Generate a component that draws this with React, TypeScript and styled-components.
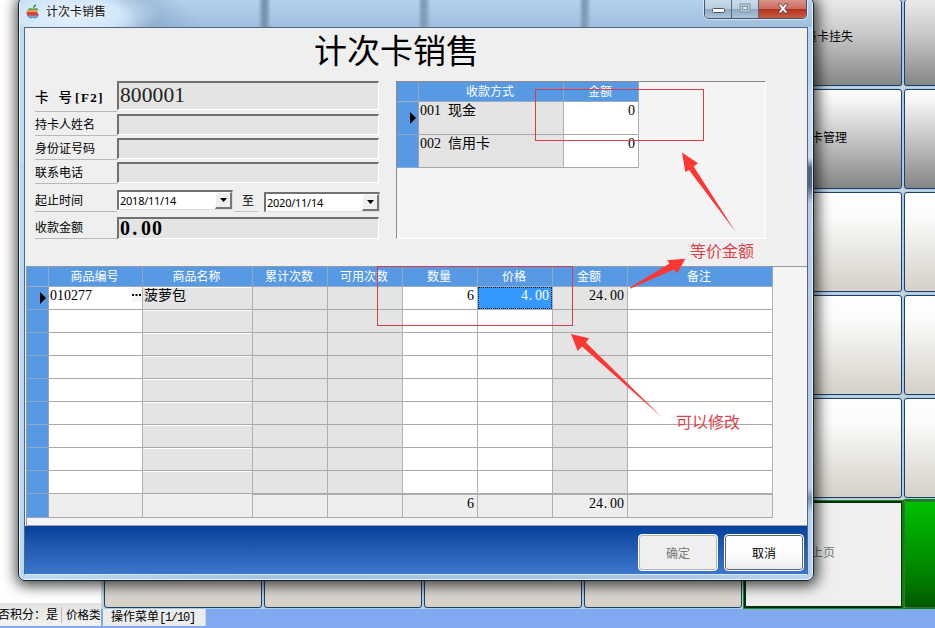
import React from "react";
import styled, { createGlobalStyle, css } from "styled-components";

const cjk = `"Noto Sans CJK SC", sans-serif`;
const blue = "#579ae3";

const GlobalStyle = createGlobalStyle`
  * { box-sizing: border-box; }
  html, body { margin: 0; height: 100%; overflow: hidden; }
  body { font-family: "Liberation Serif", ${cjk}; font-size: 12px; line-height: 16px; color: #000; }
`;

const Desktop = styled.div`
  position: relative;
  width: 935px;
  height: 628px;
  overflow: hidden;
  background: #80a9ef;
  display: flex;
`;

/* ---------- application behind the dialog ---------- */

const SideColumn = styled.div`
  width: 101px;
  height: 626px;
  flex: none;
  display: flex;
  flex-direction: column;
  overflow: hidden;
  background: #fff;
`;
const SideBody = styled.div`
  flex: 1;
`;
const StatusBar = styled.div`
  height: 23px;
  display: flex;
  align-items: center;
  white-space: nowrap;
  background: linear-gradient(#e3e2e0, #f3f3f3);
`;
const StatusItem = styled.span<{ $first?: boolean }>`
  flex: none;
  width: ${(p) => (p.$first ? 64 : 39)}px;
  margin-left: ${(p) => (p.$first ? -2 : 0)}px;
  padding-left: ${(p) => (p.$first ? 0 : 4)}px;
  font-size: ${(p) => (p.$first ? 12 : 11.5)}px;
  border-right: ${(p) => (p.$first ? 1 : 0)}px solid #bbb;
`;
const MenuColumn = styled.div`
  width: 834px;
  height: 628px;
  flex: none;
  display: flex;
  flex-direction: column;
`;
const TileGrid = styled.div`
  height: 609px;
  flex: none;
  padding-left: 2px;
  display: grid;
  grid-template-columns: repeat(6, 160px);
  grid-template-rows: 87px repeat(4, 103px) 110px;
  overflow: hidden;
  background: #cdd2d2;
`;
const tones = {
  dark: "linear-gradient(#e9e9e9, #c9c9c9 40%, #868686)",
  grey: "linear-gradient(#fff, #f4f4f4 12%, #c5c5c5 50%, #868686)",
  light: "linear-gradient(#fff, #fbfbfa 25%, #e9e7e3 60%, #d5d0c7)",
  white: "#efefef",
  green: "linear-gradient(#00c000, #007c00 75%, #005800)",
};
const labelTops = { dark: 29, grey: 40, light: 0, white: 42, green: 0 };
const Tile = styled.div<{ $tone: keyof typeof tones; $indent?: number }>`
  margin: ${(p) => (p.$tone === "dark" ? "0 1px 1px" : "2px 1px 1px")};
  padding-left: ${(p) => p.$indent ?? 0}px;
  padding-top: ${(p) => labelTops[p.$tone]}px;
  border: 1px solid #1e3f66;
  border-top-width: ${(p) => (p.$tone === "dark" ? 0 : 1)}px;
  border-radius: 3px;
  box-shadow: 0 0 0 1px #a9cbea;
  background: ${(p) => tones[p.$tone]};
  white-space: nowrap;
  ${(p) =>
    p.$tone === "white" &&
    css`
      border: 2px solid #052f05;
      border-right-width: 1px;
      border-radius: 0;
      box-shadow: 0 0 0 1px #1b8a1b;
      color: #777;
    `}
  ${(p) =>
    p.$tone === "green" &&
    css`
      border: 1px solid #3a6f3a;
      border-radius: 2px;
      box-shadow: 0 0 0 2px #0b820b;
    `}
`;
const Tab = styled.div`
  width: 103px;
  height: 17px;
  margin-left: 2px;
  padding-left: 8px;
  background: #ececec;
  border-right: 1px solid #cfd3da;
`;
const Narrow = styled.span`
  font-family: "Liberation Mono", monospace;
  font-size: 12px;
  letter-spacing: -1.2px;
`;

/* ---------- dialog frame ---------- */

const Dialog = styled.div`
  position: absolute;
  left: 18px;
  top: -3px;
  width: 796px;
  height: 584px;
  display: flex;
  flex-direction: column;
  border: 1px solid #17222f;
  border-radius: 7px;
  padding: 0 5px 5px;
  background:
    linear-gradient(to bottom, transparent 0 166px, #b9d8f8 166px) left / 5px 100% no-repeat,
    linear-gradient(to bottom, transparent 0 85px, #c6dcf2 95px 160px, #52677e 170px 188px, #b5cfe9 205px 490px, #7895b0 500px, #b5d2f0 515px) right / 6px 100% no-repeat,
    linear-gradient(to right, #bfdcf7, #a4c4e2 30%, #a7c5e0 80%, #b8d6f4);
  box-shadow:
    inset 0 0 0 1px rgba(255, 255, 255, 0.75),
    1px 2px 14px 3px rgba(0, 0, 0, 0.72);
`;
const TitleBar = styled.div`
  height: 29px;
  margin: 0 -4px;
  flex: none;
  display: flex;
  align-items: flex-start;
  padding: 2px 5px 0 6px;
  border-radius: 6px 6px 0 0;
  background:
    radial-gradient(ellipse 90px 30px at 50px 17px, #e4f1fd, #d3e7fa 55%, transparent),
    linear-gradient(to right, transparent 238px, #7795b3 243px 246px, transparent 251px 398px, #7f9dba 402px 405px, transparent 411px 559px, #7f9dba 563px 566px, transparent 571px),
    linear-gradient(55deg, transparent 85px, rgba(125, 156, 188, 0.6) 100px, transparent 150px),
    linear-gradient(#b5d3ef, #9fbfde);
`;
const IconSlot = styled.span`
  display: flex;
  margin-top: 4px;
`;
const Caption = styled.div`
  margin: 4px 0 0 6px;
  flex: 1;
  color: #111;
  text-shadow: 0 0 5px #fff;
`;
const WindowButtons = styled.div`
  display: flex;
  height: 19px;
  width: 103px;
  border: 1px solid #44566a;
  border-top: 0;
  border-radius: 0 0 5px 5px;
  overflow: hidden;
  box-shadow: 0 0 0 1px rgba(255, 255, 255, 0.5);
`;
const WindowButton = styled.div<{ $kind: "min" | "max" | "close" }>`
  width: ${(p) => (p.$kind === "close" ? 47 : 27)}px;
  display: flex;
  align-items: center;
  justify-content: center;
  padding-bottom: ${(p) => (p.$kind === "close" ? 1 : 3)}px;
  border-right: ${(p) => (p.$kind === "close" ? 0 : 1)}px solid #54677b;
  background: ${(p) =>
    p.$kind === "close"
      ? "linear-gradient(#d8948a, #cb6d5f 48%, #b2301c 52%, #cc5f3e)"
      : "linear-gradient(#cbdbe9, #b9ccdf 48%, #8fa8c0 52%, #adc4d9)"};
`;
const Client = styled.div`
  flex: 1;
  min-height: 0;
  display: flex;
  flex-direction: column;
  border: 1px solid #54677c;
  border-bottom-color: #dbeafa;
  background: #efefef;
`;
const Heading = styled.h1`
  margin: 0;
  height: 53px;
  flex: none;
  padding-top: 1px;
  padding-left: 289px;
  font: 400 33px/40px ${cjk};
`;
const Upper = styled.div`
  height: 185px;
  flex: none;
  display: flex;
  align-items: flex-start;
  padding-left: 10px;
`;

/* ---------- card form ---------- */

const Form = styled.div`
  width: 345px;
  margin-right: 16px;
  flex: none;
`;
const Row = styled.div<{ $h: number }>`
  display: flex;
  align-items: flex-start;
  height: ${(p) => p.$h}px;
`;
const Label = styled.div<{ $bold?: boolean; $h: number; $top: number }>`
  width: 82px;
  height: ${(p) => p.$h}px;
  flex: none;
  padding-top: ${(p) => p.$top}px;
  border-bottom: 1px solid #b8b8b8;
  font-weight: ${(p) => (p.$bold ? 700 : 400)};
  white-space: pre;
`;
const LabelWord = styled.span`
  font-family: ${cjk};
  font-size: 13.5px;
  font-weight: 500;
  word-spacing: 2px;
`;
const KeyHint = styled.span`
  margin-left: 3px;
  font: 700 13px/16px "Liberation Serif", serif;
  letter-spacing: 1.5px;
`;
const Field = styled.div<{ $top: number; $h: number; $bold?: boolean }>`
  width: 262px;
  height: ${(p) => p.$h}px;
  margin-top: ${(p) => p.$top}px;
  padding-left: 1px;
  border: 2px solid #717171;
  border-right: 1px solid #fff;
  border-bottom: 1px solid #fff;
  background: #e4e4e4;
  color: ${(p) => (p.$bold ? "#000" : "#222")};
  font-size: ${(p) => (p.$bold ? 20 : 21.5)}px;
  line-height: ${(p) => (p.$bold ? 19 : 25)}px;
  font-weight: ${(p) => (p.$bold ? 700 : 400)};
  letter-spacing: ${(p) => (p.$bold ? 1 : 0.1)}px;
`;
const Dot = styled.span`
  display: inline-block;
  width: 0.5em;
  padding-left: 0.06em;
  text-align: left;
`;
const DateBox = styled.div<{ $top: number }>`
  width: 116px;
  height: 20px;
  margin-top: ${(p) => p.$top}px;
  display: flex;
  border: 2px solid #717171;
  border-right: 1px solid #ddd;
  border-bottom: 1px solid #ddd;
  background: #fff;
  padding-left: 1px;
  font: 11px/17px "Noto Sans", sans-serif;
  letter-spacing: -0.25px;
`;
const DateText = styled.span`
  flex: 1;
`;
const DropButton = styled.span`
  width: 17px;
  height: 17px;
  display: flex;
  align-items: center;
  justify-content: center;
  background: #efefef;
  border: 1px solid #fff;
  border-right: 2px solid #777;
  border-bottom: 2px solid #777;
`;
const Until = styled.div`
  width: 24px;
  height: 20px;
  margin: 8px 6px 0 1px;
  padding: 1px 0 0 8px;
  border-bottom: 1px solid #c4c4c4;
  flex: none;
`;

/* ---------- tables ---------- */

const PayPanel = styled.div`
  width: 370px;
  height: 158px;
  border: 1px solid #fff;
  border-top-color: #8b8b8b;
  border-left-color: #8b8b8b;
  background: #f4f4f4;
`;
const PayGrid = styled.div`
  display: grid;
  width: 242px;
  grid-template-columns: 22px 145px 75px;
  grid-template-rows: 20px 33px 33px;
`;
const ItemPanel = styled.div`
  flex: 1;
  min-height: 0;
  margin-left: 1px;
  border-top: 1px solid #8f9aa6;
  border-left: 1px solid #9a9a9a;
  border-bottom: 1px solid #a4a4a4;
  background: #f4f4f4;
`;
const ItemGrid = styled.div`
  display: grid;
  width: 746px;
  grid-template-columns: 22px 94px 110px repeat(5, 75px) 145px;
  grid-template-rows: 20px repeat(9, 23px) 24px;
`;
const Cell = styled.div<{ $fill: string; $right?: boolean; $total?: boolean; $inset?: boolean }>`
  display: flex;
  justify-content: ${(p) => (p.$right ? "flex-end" : "space-between")};
  padding: 0 3px 0 1px;
  border-right: 1px solid #b0b0b0;
  border-bottom: 1px solid #a9a9a9;
  border-top: ${(p) => (p.$total ? "1px solid #b0b0b0" : "0")};
  box-shadow: ${(p) => (p.$inset ? "inset 0 1px #fff" : "none")};
  background: ${(p) => p.$fill};
  font-size: 14px;
  line-height: 18px;
  white-space: pre;
  overflow: hidden;
`;
const HeadCell = styled.div<{ $low?: boolean }>`
  display: flex;
  justify-content: center;
  align-items: center;
  border-right: 1px solid #8fa9c4;
  border-bottom: 1px solid #9aacbf;
  background: ${blue};
  color: #fff;
  font-size: 12px;
  padding: ${(p) => (p.$low ? 1 : 0)}px 2px 0 0;
`;
const Marker = styled.div`
  display: flex;
  align-items: center;
  justify-content: flex-end;
  padding-right: 2px;
  border-right: 1px solid #9aa4b0;
  border-bottom: 1px solid #8fa9c4;
  background: ${blue};
`;
const Selected = styled.div`
  flex: 1;
  margin: 0 -3px 0 -1px;
  padding-right: 2px;
  border: 1px dotted #1b1b1b;
  background: #3399ff;
  color: #fff;
  text-align: right;
  line-height: 16px;
`;
const More = styled.span`
  width: 10px;
  height: 15px;
  margin-right: -3px;
  padding-top: 7px;
  display: flex;
  background: #f5f5f5;
`;

/* ---------- footer ---------- */

const Footer = styled.div`
  height: 48px;
  flex: none;
  display: flex;
  justify-content: flex-end;
  gap: 6px;
  padding: 8px 3px 0 0;
  background: linear-gradient(#04419c, #1f57ae 40%, #3d76cd);
`;
const FooterButton = styled.button<{ $disabled?: boolean }>`
  width: 80px;
  height: 37px;
  padding: 0;
  border: 1px solid #fff;
  border-radius: 4px;
  box-shadow: inset 0 0 0 1px ${(p) => (p.$disabled ? "#b5b5b5" : "#55657a")};
  background: ${(p) => (p.$disabled ? "#efefef" : "linear-gradient(#fff, #fdfdfd 55%, #ebebeb)")};
  color: ${(p) => (p.$disabled ? "#777" : "#000")};
  font: 12px/16px ${cjk};
`;

/* ---------- annotations ---------- */

const Overlay = styled.svg`
  position: absolute;
  left: 0;
  top: 0;
  pointer-events: none;
`;
const Note = styled.div<{ $x: number; $y: number }>`
  position: absolute;
  left: ${(p) => p.$x}px;
  top: ${(p) => p.$y}px;
  font: 16px/20px ${cjk};
  color: #df3f48;
  white-space: nowrap;
`;

const Decimal = ({ value }: { value: string }) => {
  const [whole, frac] = value.split(".");
  return (
    <span>
      {whole}
      <Dot>.</Dot>
      {frac}
    </span>
  );
};

const Pointer = () => (
  <svg width="6" height="12" viewBox="0 0 6 12">
    <path d="M0 0L6 6L0 12Z" fill="#000" />
  </svg>
);

const Arrow = () => (
  <svg width="7" height="4" viewBox="0 0 7 4">
    <path d="M0 0H7L3.5 4Z" fill="#000" />
  </svg>
);

const AppleIcon = () => (
  <svg width="14" height="15" viewBox="0 0 14 15">
    <path d="M7 4C7 2 8 .6 10 .2C10.300 2.200 9 3.700 7 4Z" fill="#3d9a4d" />
    <path d="M2 5.200C3.500 3.500 5.500 4 7 4.600C9 3.700 11 3.700 12.300 5.300L11.400 7H.8Z" fill="#70a85b" />
    <path d="M.9 6.200H11.500L11.300 8.500H.6Z" fill="#f1a654" />
    <path d="M.6 8.100H11.300C11.600 9.800 12.300 10.400 13 10.900H.9Z" fill="#d64337" />
    <path d="M.9 10.900H13L12.100 12.400H1.700Z" fill="#a16b91" />
    <path d="M1.700 12.200H12.200C11 14.600 9.500 15 7.200 14.100C4.500 15 3 14.600 1.700 12.200Z" fill="#639dcc" />
  </svg>
);

const columns = ["商品编号", "商品名称", "累计次数", "可用次数", "数量", "价格", "金额", "备注"];
const fills = ["#fff", "#e4e4e4", "#e4e4e4", "#e4e4e4", "#fff", "#fff", "#e4e4e4", "#fff"];
const payments = [
  { name: "001  现金", amount: "0" },
  { name: "002  信用卡", amount: "0" },
];
const tileRows: { tone: keyof typeof tones; label: string; indent: number }[] = [
  { tone: "dark", label: "员卡挂失", indent: 60 },
  { tone: "grey", label: "卡管理", indent: 66 },
  { tone: "light", label: "", indent: 0 },
  { tone: "light", label: "", indent: 0 },
  { tone: "light", label: "", indent: 0 },
];

const firstRow = (column: number) => {
  switch (column) {
    case 0:
      return (
        <>
          <span>010277</span>
          <More>
            <svg width="9" height="2">
              <path d="M0 0H2V2H0ZM3.500 0H5.500V2H3.500ZM7 0H9V2H7Z" fill="#000" />
            </svg>
          </More>
        </>
      );
    case 1:
      return "菠萝包";
    case 4:
      return "6";
    case 5:
      return (
        <Selected>
          <Decimal value="4.00" />
        </Selected>
      );
    case 6:
      return <Decimal value="24.00" />;
    default:
      return null;
  }
};

const Background = () => (
  <>
    <SideColumn>
      <SideBody />
      <StatusBar>
        <StatusItem $first>否积分：是</StatusItem>
        <StatusItem>价格类</StatusItem>
      </StatusBar>
    </SideColumn>
    <MenuColumn>
      <TileGrid>
        {tileRows.map((row, r) =>
          [0, 1, 2, 3, 4, 5].map((c) => (
            <Tile key={`${r}-${c}`} $tone={row.tone} $indent={row.indent}>
              {c === 4 ? row.label : null}
            </Tile>
          )),
        )}
        {[0, 1, 2, 3].map((c) => (
          <Tile key={c} $tone="light" />
        ))}
        <Tile $tone="white" $indent={65}>
          上页
        </Tile>
        <Tile $tone="green" />
      </TileGrid>
      <Tab>
        操作菜单<Narrow>[1/10]</Narrow>
      </Tab>
    </MenuColumn>
  </>
);

const DatePicker = ({ value, top }: { value: string; top: number }) => (
  <DateBox $top={top}>
    <DateText>{value}</DateText>
    <DropButton>
      <Arrow />
    </DropButton>
  </DateBox>
);

const CardForm = () => (
  <Form>
    <Row $h={31}>
      <Label $h={31} $top={7} $bold>
        <LabelWord>卡  号</LabelWord>
        <KeyHint>[F2]</KeyHint>
      </Label>
      <Field $top={0} $h={29}>
        800001
      </Field>
    </Row>
    {["持卡人姓名", "身份证号码", "联系电话"].map((label) => (
      <Row key={label} $h={24}>
        <Label $h={24} $top={5}>
          {label}
        </Label>
        <Field $top={2} $h={21} />
      </Row>
    ))}
    <Row $h={28}>
      <Label $h={28} $top={9}>
        起止时间
      </Label>
      <DatePicker value="2018/11/14" top={6} />
      <Until>至</Until>
      <DatePicker value="2020/11/14" top={8} />
    </Row>
    <Row $h={27}>
      <Label $h={27} $top={8}>
        收款金额
      </Label>
      <Field $top={5} $h={22} $bold>
        <Decimal value="0.00" />
      </Field>
    </Row>
  </Form>
);

const Payments = () => (
  <PayPanel>
    <PayGrid>
      <HeadCell />
      <HeadCell>收款方式</HeadCell>
      <HeadCell>金额</HeadCell>
      {payments.map((p, i) => (
        <React.Fragment key={p.name}>
          <Marker>{i === 0 && <Pointer />}</Marker>
          <Cell $fill="#e4e4e4">{p.name}</Cell>
          <Cell $fill="#fff" $right>
            {p.amount}
          </Cell>
        </React.Fragment>
      ))}
    </PayGrid>
  </PayPanel>
);

const Items = () => (
  <ItemPanel>
    <ItemGrid>
      <HeadCell />
      {columns.map((c) => (
        <HeadCell key={c} $low>
          {c}
        </HeadCell>
      ))}
      {Array.from({ length: 9 }, (_, r) => (
        <React.Fragment key={r}>
          <Marker>{r === 0 && <Pointer />}</Marker>
          {fills.map((fill, c) => (
            <Cell key={c} $fill={fill} $right={c === 4 || c === 6} $inset={c === 1}>
              {r === 0 ? firstRow(c) : null}
            </Cell>
          ))}
        </React.Fragment>
      ))}
      <Marker />
      {fills.map((_, c) => (
        <Cell key={c} $fill="#eee" $right $total={c > 1}>
          {c === 4 ? "6" : c === 6 ? <Decimal value="24.00" /> : null}
        </Cell>
      ))}
    </ItemGrid>
  </ItemPanel>
);

export default function App() {
  return (
    <Desktop>
      <GlobalStyle />
      <Background />
      <Dialog>
        <TitleBar>
          <IconSlot>
            <AppleIcon />
          </IconSlot>
          <Caption>计次卡销售</Caption>
          <WindowButtons>
            <WindowButton $kind="min">
              <svg width="13" height="12">
                <rect x=".5" y="6.500" width="12" height="4" rx="1" fill="#fff" stroke="#44566a" />
              </svg>
            </WindowButton>
            <WindowButton $kind="max">
              <svg width="12" height="10">
                <rect x="1" y="1" width="10" height="8" fill="#b9c8d6" stroke="#8193a5" />
                <rect x="3.500" y="3.500" width="5" height="3" fill="#dfe8f0" stroke="#8193a5" />
              </svg>
            </WindowButton>
            <WindowButton $kind="close">
              <svg width="12" height="11" viewBox="0 0 12 11">
                <path d="M1 1H4L6 3.500L8 1H11L7.800 5.500L11 10H8L6 7.500L4 10H1L4.200 5.500Z" fill="#fff" stroke="#5d3a44" strokeWidth=".8" />
              </svg>
            </WindowButton>
          </WindowButtons>
        </TitleBar>
        <Client>
          <Heading>计次卡销售</Heading>
          <Upper>
            <CardForm />
            <Payments />
          </Upper>
          <Items />
          <Footer>
            <FooterButton $disabled>确定</FooterButton>
            <FooterButton>取消</FooterButton>
          </Footer>
        </Client>
      </Dialog>
      <Overlay width="935" height="628" viewBox="0 0 935 628">
        <g fill="none" stroke="#dc3c47">
          <rect x="535.5" y="89.5" width="168" height="51" />
          <rect x="377.5" y="266.5" width="195" height="59" />
        </g>
        <g fill="#fb3834">
          <path d="M682 152.500L698 163.300L693.700 166.500L735.700 232L689 170L685.300 172Z" />
          <path d="M685.300 258.800L667 260.300L669.500 263.500L630 287.500V288.700L674 269.500L677.300 273.500Z" />
          <path d="M571 334L589 338.300L586 342.500L662.500 417.800L582 346.500L577.700 351Z" />
        </g>
      </Overlay>
      <Note $x={690} $y={240}>
        等价金额
      </Note>
      <Note $x={676} $y={411}>
        可以修改
      </Note>
    </Desktop>
  );
}
